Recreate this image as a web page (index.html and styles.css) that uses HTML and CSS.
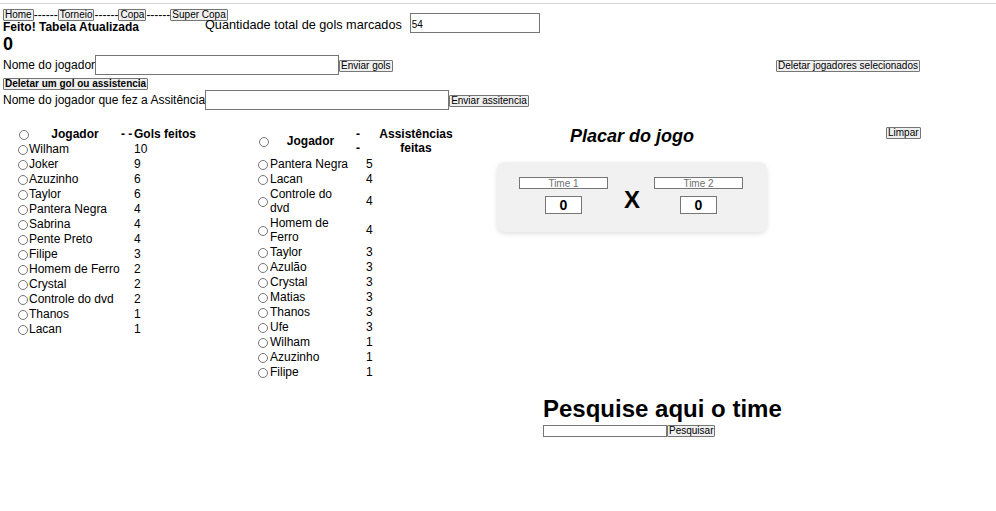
FILE: index.html
```html
<!DOCTYPE html>
<html lang="pt-BR">
<head>
<meta charset="utf-8">
<title>Tabela de Gols</title>
<link rel="stylesheet" href="styles.css">
</head>
<body>
<div class="topline"></div>
<nav class="nav"><button class="btn">Home</button><span class="dash">------</span><button class="btn">Torneio</button><span class="dash">------</span><button class="btn">Copa</button><span class="dash">------</span><button class="btn">Super Copa</button></nav>

<div class="status-row">
  <div class="status">
    <div class="done">Feito! Tabela Atualizada</div>
    <div class="zero">0</div>
  </div>
  <div class="total">
    <label class="lbl lbl-total">Quantidade total de gols marcados</label>
    <input class="inp inp-total" type="text" value="54">
  </div>
</div>

<div class="form-row form-row-player">
  <label class="lbl">Nome do jogador</label>
  <input class="inp inp-name" type="text">
  <button class="btn">Enviar gols</button>
  <button class="btn btn-right">Deletar jogadores selecionados</button>
</div>

<button class="btn btn-bold">Deletar um gol ou assistencia</button>

<div class="form-row">
  <label class="lbl">Nome do jogador que fez a Assitência</label>
  <input class="inp inp-name" type="text">
  <button class="btn">Enviar assitencia</button>
</div>

<main class="board">
  <table class="tbl tbl-gols">
    <colgroup><col class="c-radio"><col class="c-name1"><col class="c-dash1"><col class="c-val1"></colgroup>
    <thead>
      <tr><th><input class="radio" type="radio"></th><th>Jogador</th><th class="th-dash">- -</th><th class="th-left">Gols feitos</th></tr>
    </thead>
    <tbody>
      <tr><td><input class="radio" type="radio"></td><td>Wilham</td><td></td><td class="val">10</td></tr>
      <tr><td><input class="radio" type="radio"></td><td>Joker</td><td></td><td class="val">9</td></tr>
      <tr><td><input class="radio" type="radio"></td><td>Azuzinho</td><td></td><td class="val">6</td></tr>
      <tr><td><input class="radio" type="radio"></td><td>Taylor</td><td></td><td class="val">6</td></tr>
      <tr><td><input class="radio" type="radio"></td><td>Pantera Negra</td><td></td><td class="val">4</td></tr>
      <tr><td><input class="radio" type="radio"></td><td>Sabrina</td><td></td><td class="val">4</td></tr>
      <tr><td><input class="radio" type="radio"></td><td>Pente Preto</td><td></td><td class="val">4</td></tr>
      <tr><td><input class="radio" type="radio"></td><td>Filipe</td><td></td><td class="val">3</td></tr>
      <tr><td><input class="radio" type="radio"></td><td>Homem de Ferro</td><td></td><td class="val">2</td></tr>
      <tr><td><input class="radio" type="radio"></td><td>Crystal</td><td></td><td class="val">2</td></tr>
      <tr><td><input class="radio" type="radio"></td><td>Controle do dvd</td><td></td><td class="val">2</td></tr>
      <tr><td><input class="radio" type="radio"></td><td>Thanos</td><td></td><td class="val">1</td></tr>
      <tr><td><input class="radio" type="radio"></td><td>Lacan</td><td></td><td class="val">1</td></tr>
    </tbody>
  </table>

  <table class="tbl tbl-assist">
    <colgroup><col class="c-radio2"><col class="c-name2"><col class="c-dash2"><col class="c-val2"></colgroup>
    <thead>
      <tr><th><input class="radio" type="radio"></th><th>Jogador</th><th class="th-dash2">- -</th><th class="th-assist">Assistências feitas</th></tr>
    </thead>
    <tbody>
      <tr><td><input class="radio" type="radio"></td><td>Pantera Negra</td><td></td><td class="val2">5</td></tr>
      <tr><td><input class="radio" type="radio"></td><td>Lacan</td><td></td><td class="val2">4</td></tr>
      <tr><td><input class="radio" type="radio"></td><td>Controle do dvd</td><td></td><td class="val2">4</td></tr>
      <tr><td><input class="radio" type="radio"></td><td>Homem de Ferro</td><td></td><td class="val2">4</td></tr>
      <tr><td><input class="radio" type="radio"></td><td>Taylor</td><td></td><td class="val2">3</td></tr>
      <tr><td><input class="radio" type="radio"></td><td>Azulão</td><td></td><td class="val2">3</td></tr>
      <tr><td><input class="radio" type="radio"></td><td>Crystal</td><td></td><td class="val2">3</td></tr>
      <tr><td><input class="radio" type="radio"></td><td>Matias</td><td></td><td class="val2">3</td></tr>
      <tr><td><input class="radio" type="radio"></td><td>Thanos</td><td></td><td class="val2">3</td></tr>
      <tr><td><input class="radio" type="radio"></td><td>Ufe</td><td></td><td class="val2">3</td></tr>
      <tr><td><input class="radio" type="radio"></td><td>Wilham</td><td></td><td class="val2">1</td></tr>
      <tr><td><input class="radio" type="radio"></td><td>Azuzinho</td><td></td><td class="val2">1</td></tr>
      <tr><td><input class="radio" type="radio"></td><td>Filipe</td><td></td><td class="val2">1</td></tr>
    </tbody>
  </table>

  <section class="score">
    <h2 class="score-title">Placar do jogo</h2>
    <div class="score-box">
      <div class="team">
        <input class="team-name" type="text" placeholder="Time 1">
        <input class="team-goals" type="text" value="0">
      </div>
      <span class="versus">X</span>
      <div class="team">
        <input class="team-name" type="text" placeholder="Time 2">
        <input class="team-goals" type="text" value="0">
      </div>
    </div>
  </section>

  <button class="btn btn-clear">Limpar</button>
</main>

<section class="search">
  <h1 class="search-title">Pesquise aqui o time</h1>
  <div class="search-row">
    <input class="inp inp-search" type="text">
    <button class="btn">Pesquisar</button>
  </div>
</section>
</body>
</html>
```

FILE: styles.css
```css
* { box-sizing: border-box; }

body {
  margin: 0;
  font-family: "Liberation Sans", Arial, sans-serif;
  font-size: 12px;
  color: #000;
  background: #fff;
}

.topline {
  height: 4px;
  border-bottom: 1px solid #d4d4d4;
}

.btn {
  font-family: "Liberation Sans", Arial, sans-serif;
  font-size: 10px;
  line-height: 10px;
  height: 12px;
  padding: 0 1px;
  border: 1px solid #767676;
  border-radius: 1px;
  background: #efefef;
  color: #000;
  margin: 0;
  white-space: nowrap;
}

.nav {
  display: flex;
  align-items: center;
  margin: 5px 0 0 3px;
  height: 12px;
  line-height: 12px;
}

.dash { font-size: 12px; line-height: 12px; }

.status-row {
  display: flex;
  align-items: flex-start;
  padding-left: 3px;
}

.status { width: 202px; }

.done {
  font-weight: bold;
  line-height: 13px;
}

.zero {
  font-weight: bold;
  font-size: 18px;
  line-height: 20px;
}

.lbl { line-height: 14px; white-space: nowrap; }

.inp {
  font-family: "Liberation Sans", Arial, sans-serif;
  font-size: 10px;
  border: 1px solid #767676;
  border-radius: 0;
  padding: 0 1px;
  margin: 0;
  height: 20px;
  background: #fff;
  color: #000;
}

.total {
  display: flex;
  align-items: flex-end;
  margin-top: -8px;
}

.lbl-total { font-size: 12.7px; padding-bottom: 1px; }

.inp-total { width: 130px; margin-left: 8px; padding-top: 2px; }

.form-row {
  display: flex;
  align-items: baseline;
  padding: 0 76px 0 3px;
}

.form-row-player { margin-top: 1px; }

.inp-name { width: 244px; }

.btn-right { margin-left: auto; }

.btn-bold {
  display: block;
  font-weight: bold;
  margin: 3px 0 0 3px;
}

.board {
  display: flex;
  align-items: flex-start;
  margin-top: 16px;
}

.tbl {
  border-collapse: separate;
  border-spacing: 0 1px;
  table-layout: fixed;
  font-size: 12px;
  line-height: 14px;
}

.tbl th, .tbl td { padding: 0; vertical-align: middle; }
.tbl th { font-weight: bold; text-align: center; }

.tbl-gols { margin-left: 15px; width: 183px; }
.c-radio { width: 14px; }
.c-name1 { width: 92px; }
.c-dash1 { width: 11px; }
.c-val1 { width: 66px; }
.th-dash { text-align: right; white-space: nowrap; }
.th-left { text-align: left; }
.val { padding-left: 2px !important; }

.tbl-assist { margin-left: 58px; width: 211px; }
.tbl-assist thead th { padding-bottom: 1px; }
.c-radio2 { width: 14px; }
.c-name2 { width: 81px; }
.c-dash2 { width: 12px; }
.c-val2 { width: 104px; }
.tbl-assist .th-dash2 { padding: 0 1px 1px 3px; }
.tbl-assist .th-assist { padding-left: 2px; }
.val2 { padding-left: 3px !important; }

.radio {
  width: 10px;
  height: 10px;
  margin: 0 0 0 3px;
  vertical-align: middle;
  accent-color: #767676;
}

.tbl-assist .radio { margin-left: 2px; }

.score {
  margin-left: 30px;
  width: 270px;
}

.score-title {
  margin: 0;
  text-align: center;
  font-size: 18px;
  font-style: italic;
  font-weight: bold;
  line-height: 20px;
}

.score-box {
  margin-top: 16px;
  height: 70px;
  background: #f1f1f1;
  border-radius: 8px;
  box-shadow: 0 2px 5px rgba(0, 0, 0, 0.12);
  display: flex;
  align-items: center;
  padding: 0 24px 3px 22px;
}

.team {
  display: flex;
  flex-direction: column;
  align-items: center;
  gap: 7px;
  width: 89px;
}

.team-name {
  width: 89px;
  height: 12px;
  border: 1px solid #767676;
  padding: 0;
  margin: 0;
  font-family: "Liberation Sans", Arial, sans-serif;
  font-size: 10px;
  text-align: center;
  background: #fff;
}

.team-name::placeholder { color: #6f6f6f; }

.team-goals {
  width: 37px;
  height: 18px;
  border: 1px solid #767676;
  padding: 0;
  margin: 0;
  font-family: "Liberation Sans", Arial, sans-serif;
  font-size: 14px;
  font-weight: bold;
  text-align: center;
  background: #fff;
  color: #000;
}

.versus {
  font-size: 24px;
  font-weight: bold;
  margin: 8px 14px 0 16px;
}

.btn-clear { margin: 1px 0 0 119px; }

.search {
  padding-left: 543px;
  margin-top: 15px;
}

.search-title {
  margin: 0;
  font-size: 24px;
  font-weight: bold;
  line-height: 28px;
}

.search-row { display: flex; margin-top: 2px; }

.inp-search { width: 124px; height: 12px; }
```
